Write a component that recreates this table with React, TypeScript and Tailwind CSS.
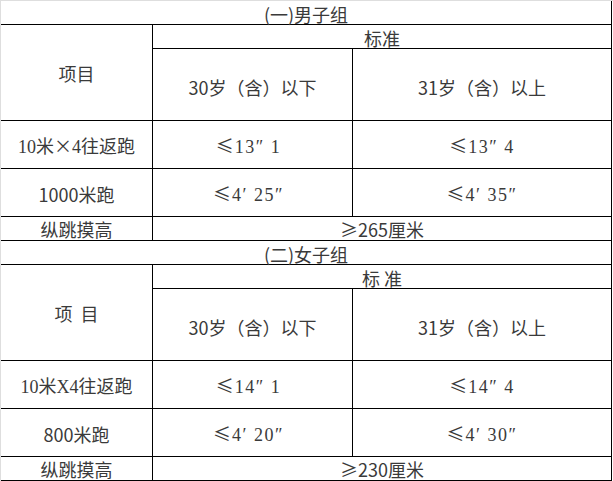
import React from "react";

type Row = { name: React.ReactNode; a: React.ReactNode; b: React.ReactNode };

const serif = "font-['Liberation_Serif','Noto_Sans_CJK_SC',serif]";

function Le({ v }: { v: string }) {
  return (
    <span className="whitespace-pre">
      <span className="font-['Noto_Sans_CJK_SC',sans-serif] mr-[1px]">≤</span>
      <span className={`${serif} tracking-[1.5px]`}>{v}</span>
    </span>
  );
}

function Section({
  title,
  std,
  item,
  rows,
  jump,
}: {
  title: string;
  std: string;
  item: string;
  rows: Row[];
  jump: string;
}) {
  const cell = "flex items-center justify-center border-r border-b border-black";
  return (
    <div className="w-[611px]">
      <div className="h-[24px] border-r border-b border-black flex items-center justify-center pt-[3px]">
        {title}
      </div>
      <div className="grid grid-cols-[152px_200px_259px] grid-rows-[24px_72px_48px_48px_24px]">
        <div className={`${cell} row-span-2 whitespace-pre`}>{item}</div>
        <div className={`${cell} col-span-2 whitespace-pre pt-[3px]`}>{std}</div>
        <div className={`${cell} pt-[5px]`}>30岁（含）以下</div>
        <div className={`${cell} pt-[5px]`}>31岁（含）以上</div>
        {rows.map((r, i) => (
          <React.Fragment key={i}>
            <div className={`${cell} pt-[2px]`}>{r.name}</div>
            <div className={`${cell} pt-[2px] pr-[8px]`}>{r.a}</div>
            <div className={`${cell} pt-[2px]`}>{r.b}</div>
          </React.Fragment>
        ))}
        <div className={`${cell} pt-[1px]`}>纵跳摸高</div>
        <div className={`${cell} col-span-2 pt-[1px]`}>{jump}</div>
      </div>
    </div>
  );
}

export default function App() {
  return (
    <div className="w-[613px] h-[481px] bg-white border-l border-t border-[#dedede] overflow-hidden text-[18px] leading-none text-[#3a3a3a] font-['Noto_Sans_CJK_SC',sans-serif]">
      <Section
        title="(一)男子组"
        std="标准"
        item="项目"
        rows={[
          {
            name: (
              <span>
                <span className={serif}>10</span>米×<span className={serif}>4</span>往返跑
              </span>
            ),
            a: <Le v="13″ 1" />,
            b: <Le v="13″ 4" />,
          },
          { name: "1000米跑", a: <Le v="4′ 25″" />, b: <Le v="4′ 35″" /> },
        ]}
        jump="≥265厘米"
      />
      <Section
        title="(二)女子组"
        std="标 准"
        item="项  目"
        rows={[
          {
            name: (
              <span>
                <span className={serif}>10</span>米<span className={serif}>X4</span>往返跑
              </span>
            ),
            a: <Le v="14″ 1" />,
            b: <Le v="14″ 4" />,
          },
          { name: "800米跑", a: <Le v="4′ 20″" />, b: <Le v="4′ 30″" /> },
        ]}
        jump="≥230厘米"
      />
    </div>
  );
}
